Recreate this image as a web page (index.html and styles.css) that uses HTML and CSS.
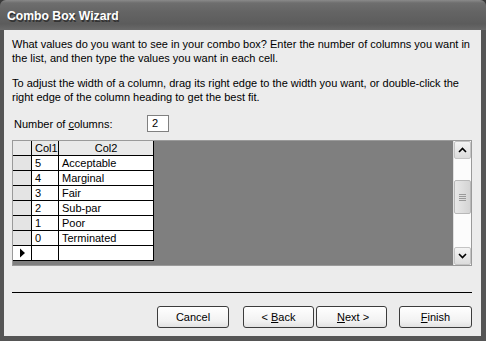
FILE: index.html
```html
<!DOCTYPE html>
<html>
<head>
<meta charset="utf-8">
<link rel="stylesheet" href="styles.css">
</head>
<body>
<div class="window">
  <div class="titlebar"><span class="title">Combo Box Wizard</span></div>
  <div class="frame">
    <div class="content">
      <p class="para">What values do you want to see in your combo box? Enter the number of columns you want in the list, and then type the values you want in each cell.</p>
      <p class="para">To adjust the width of a column, drag its right edge to the width you want, or double-click the right edge of the column heading to get the best fit.</p>
      <div class="numrow">
        <span class="numlabel">Number of <u>c</u>olumns:</span>
        <span class="numbox">2</span>
      </div>
      <div class="gridarea">
        <table class="grid">
          <tr class="head"><td class="sel"></td><td class="c1">Col1</td><td class="c2 center">Col2</td></tr>
          <tr><td class="sel"></td><td class="c1">5</td><td class="c2">Acceptable</td></tr>
          <tr><td class="sel"></td><td class="c1">4</td><td class="c2">Marginal</td></tr>
          <tr><td class="sel"></td><td class="c1">3</td><td class="c2">Fair</td></tr>
          <tr><td class="sel"></td><td class="c1">2</td><td class="c2">Sub-par</td></tr>
          <tr><td class="sel"></td><td class="c1">1</td><td class="c2">Poor</td></tr>
          <tr><td class="sel"></td><td class="c1">0</td><td class="c2">Terminated</td></tr>
          <tr><td class="sel cur"><svg width="7" height="10" viewBox="0 0 7 10"><path d="M1 0.5 L6 5 L1 9.5 Z" fill="#000"/></svg></td><td class="c1"></td><td class="c2"></td></tr>
        </table>
        <div class="spacer"></div>
        <div class="scrollbar">
          <div class="sbtn"><svg width="9" height="6" viewBox="0 0 9 6"><path d="M1 5 L4.5 1.5 L8 5" fill="none" stroke="#000" stroke-width="1.6"/></svg></div>
          <div class="track1"></div>
          <div class="thumb"><span></span><span></span><span></span><span></span></div>
          <div class="track2"></div>
          <div class="sbtn"><svg width="9" height="6" viewBox="0 0 9 6"><path d="M1 1 L4.5 4.5 L8 1" fill="none" stroke="#000" stroke-width="1.6"/></svg></div>
        </div>
      </div>
      <div class="sep"></div>
      <div class="buttons">
        <button class="btn cancel">Cancel</button>
        <button class="btn back">&lt; <u>B</u>ack</button>
        <button class="btn next">&nbsp;<u>N</u>ext &gt;</button>
        <button class="btn finish"><u>F</u>inish</button>
      </div>
    </div>
  </div>
</div>
</body>
</html>
```
FILE: styles.css
```css
html, body { margin: 0; padding: 0; }
body { width: 486px; height: 341px; overflow: hidden; background: #3a3a3a; font-family: "Liberation Sans", Arial, sans-serif; }
.window { width: 486px; height: 341px; display: flex; flex-direction: column; background: #4a4a4a; border-radius: 6px 6px 0 0; overflow: hidden; }
.titlebar { height: 30px; flex: none; background: linear-gradient(#8a8a8a 0px, #6e6e6e 3px, #646464 12px, #5c5c5c 24px, #6a6a6a 30px); display: flex; align-items: center; padding-left: 7px; }
.title { color: #fff; font-family: "Liberation Sans", Arial, sans-serif; font-weight: bold; font-size: 12.2px; padding-top: 1px; text-shadow: 1px 1px 0 #333; transform: scaleY(1.1); }
.frame { flex: 1; padding: 0 5px 5px 4px; background: #555; display: flex; }
.content { flex: 1; background: #ececec; padding: 7px 9px 0 8px; font-size: 11px; color: #000; display: flex; flex-direction: column; }
.para { margin: 0 0 11px 0; line-height: 14px; width: 460px; }
.numrow { display: flex; align-items: center; height: 19px; margin-top: -1px; }
.numlabel { width: 133px; padding-left: 2px; }
.numbox { width: 16px; height: 15px; border: 1px solid #808080; background: #fff; padding-left: 4px; line-height: 15px; }
.gridarea { margin-top: 7px; height: 124px; background: #7f7f7f; border: 1px solid #9a9a9a; display: flex; }
.grid { border-collapse: collapse; align-self: flex-start; background: #fff; }
.grid td { height: 13px; padding: 1px 0 0 3px; border: 1px solid #000; line-height: 13px; font-size: 11px; white-space: nowrap; }
.grid .sel { width: 18px; background: #e4e4e4; padding: 0; border-left: none; border-top-color: #fff; }
.grid tr.head td { background: #e9e9e9; border-top: none; }
.grid .c1 { width: 23px; }
.grid .c2 { width: 91px; }
.grid .center { text-align: center; padding-left: 0; }
.grid .cur { text-align: center; vertical-align: middle; background: #fff; }
.grid .cur svg { display: block; margin: 0 auto; }
.spacer { flex: 1; }
.scrollbar { width: 17px; display: flex; flex-direction: column; background: #fcfcfc; border-left: 1px solid #e0e0e0; }
.sbtn { height: 16px; background: linear-gradient(#f4f4f4, #dcdcdc); border: 1px solid #c4c4c4; border-radius: 2px; display: flex; align-items: center; justify-content: center; }
.track1 { height: 21px; }
.thumb { height: 32px; background: linear-gradient(90deg, #e8e8e8, #d4d4d4); border: 1px solid #b8b8b8; border-radius: 2px; display: flex; flex-direction: column; align-items: center; justify-content: center; gap: 1px; }
.thumb span { width: 7px; height: 1px; background: #9a9a9a; }
.track2 { flex: 1; }
.sep { margin-top: 26px; height: 1px; background: #000; }
.buttons { display: flex; margin-top: 13px; padding-left: 145px; }
.btn { height: 22px; font-family: "Liberation Sans", Arial, sans-serif; font-size: 11px; color: #000; background: linear-gradient(#ffffff, #f2f2f2 70%, #e2e2e2); border: 1px solid #3c3c3c; border-radius: 3px; padding: 0; }
.cancel { width: 72px; }
.back { width: 71px; margin-left: 14px; }
.next { width: 71px; margin-left: 2px; }
.finish { width: 73px; margin-left: 12px; }
```
